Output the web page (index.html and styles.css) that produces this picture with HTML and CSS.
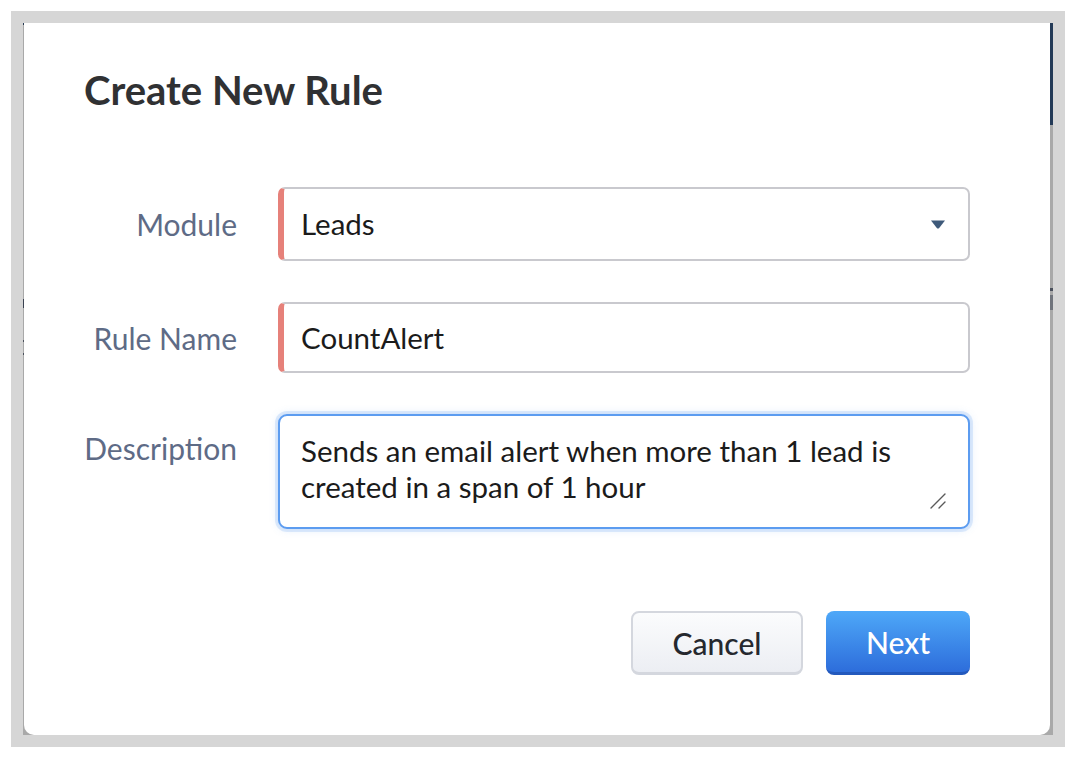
FILE: index.html
```html
<!DOCTYPE html>
<html lang="en">
<head>
<meta charset="utf-8">
<title>Create New Rule</title>
<link rel="stylesheet" href="styles.css">
</head>
<body>
<div class="frame">
  <div class="viewport">
    <div class="page-strip page-strip--left"></div>
    <div class="modal">
      <h1 class="modal-title">Create New Rule</h1>
      <form class="rule-form">
        <div class="form-row">
          <label class="form-label">Module</label>
          <div class="field field--required field--select">
            <span class="field-value">Leads</span>
            <svg class="select-caret" width="14" height="9" viewBox="0 0 14 9"><path d="M0 0.5 H14 L8.2 8 Q7 9 5.8 8 Z" fill="#3e5a7a"/></svg>
          </div>
        </div>
        <div class="form-row">
          <label class="form-label">Rule Name</label>
          <div class="field field--required field--input">
            <span class="field-value">CountAlert</span>
          </div>
        </div>
        <div class="form-row form-row--top">
          <label class="form-label form-label--top">Description</label>
          <div class="field field--textarea">
            <span class="field-value">Sends an email alert when more than 1 lead is<br>created in a span of 1 hour</span>
            <svg class="resize-grip" width="18" height="18" viewBox="0 0 18 18"><path d="M16 1 L2 15 M16 9 L10 15" stroke="#5a5a5a" stroke-width="1.4" stroke-linecap="round"/></svg>
          </div>
        </div>
      </form>
      <div class="modal-actions">
        <button type="button" class="btn btn--secondary">Cancel</button>
        <button type="button" class="btn btn--primary">Next</button>
      </div>
    </div>
    <div class="page-strip page-strip--right"></div>
  </div>
</div>
</body>
</html>
```

FILE: styles.css
```css
* { box-sizing: border-box; }

html, body {
  margin: 0;
  padding: 0;
  background: #ffffff;
}

body {
  font-family: "Lato", "Noto Sans", sans-serif;
}

.frame {
  margin: 11px 0 0 11px;
  width: 1054px;
  height: 736px;
  padding: 12px 12px 12px 12px;
  background: #d6d6d6;
}

.viewport {
  display: flex;
  width: 1030px;
  height: 712px;
  background: #a9a9a9;
  overflow: hidden;
}

.page-strip {
  flex: 0 0 auto;
  height: 100%;
}

.page-strip--left {
  width: 1px;
  background: linear-gradient(to bottom,
    #243852 0, #243852 2px,
    #a9a9a9 2px, #a9a9a9 276px,
    #3b4252 276px, #3b4252 285px,
    #a9a9a9 285px, #a9a9a9 317px,
    #4a505c 317px, #4a505c 319px,
    #a9a9a9 319px, #a9a9a9 330px,
    #4a505c 330px, #4a505c 332px,
    #a9a9a9 332px);
}

.page-strip--right {
  width: 3px;
  background: linear-gradient(to bottom,
    #233a57 0, #233a57 102px,
    #a9a9a9 102px, #a9a9a9 265px,
    #4a505c 265px, #4a505c 268px,
    #a9a9a9 268px, #a9a9a9 272px,
    #70747c 272px, #70747c 287px,
    #a9a9a9 287px);
}

.modal {
  flex: 1 1 auto;
  background: #ffffff;
  border-radius: 0 0 10px 10px;
  padding: 45px 80px 60px 60px;
  display: flex;
  flex-direction: column;
}

.modal-title {
  margin: 0;
  font-size: 40px;
  line-height: 44px;
  font-weight: 700;
  color: #303133;
  letter-spacing: 0;
}

.rule-form {
  margin-top: 75px;
  display: flex;
  flex-direction: column;
  gap: 41px;
}

.form-row {
  display: grid;
  grid-template-columns: 153px 1fr;
  column-gap: 41px;
  align-items: center;
}

.form-row--top {
  align-items: start;
}

.form-label {
  text-align: right;
  font-size: 30px;
  line-height: 36px;
  color: #5e6b86;
  white-space: nowrap;
}

.form-label--top {
  padding-top: 16px;
}

.field {
  position: relative;
  display: flex;
  align-items: center;
  background: #ffffff;
  border: 2px solid #c9c9ce;
  border-radius: 7px;
  padding: 0 22px 0 21px;
  font-size: 29.5px;
  color: #1b1b1b;
}

.field--required {
  border-left: 6px solid #e6817a;
  padding-left: 17px;
}

.field--select {
  height: 74px;
  justify-content: space-between;
}

.field--input {
  height: 71px;
}

.field-value {
  line-height: 36px;
}

.select-caret {
  margin-right: 1px;
}

.field--textarea {
  height: 115px;
  align-items: flex-start;
  padding-top: 17px;
  border-color: #5c9cf0;
  border-radius: 9px;
  box-shadow: 0 0 0 3px rgba(92, 156, 240, 0.18), 0 0 8px rgba(92, 156, 240, 0.25);
}

.resize-grip {
  position: absolute;
  right: 21px;
  bottom: 16px;
}

.modal-actions {
  margin-top: 82px;
  display: flex;
  justify-content: flex-end;
  gap: 23px;
}

.btn {
  height: 64px;
  border-radius: 8px;
  font-family: "Lato", "Noto Sans", sans-serif;
  font-size: 30px;
  font-weight: 500;
  cursor: pointer;
  padding: 0;
}

.btn--secondary {
  width: 172px;
  color: #25282e;
  background: linear-gradient(to bottom, #fbfcfd, #eceef3);
  border: 2px solid #d4d7de;
  border-bottom-width: 3px;
}

.btn--primary {
  width: 144px;
  color: #ffffff;
  background: linear-gradient(to bottom, #4ea8f8, #2d6ddb);
  border: none;
  border-bottom: 3px solid #2359bd;
}
```
